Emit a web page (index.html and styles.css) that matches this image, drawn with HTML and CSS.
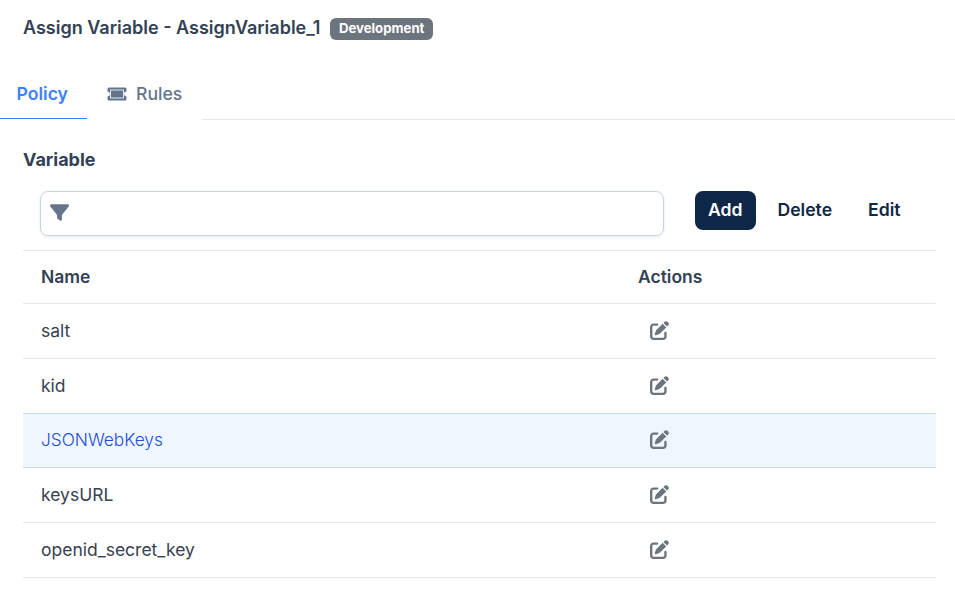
FILE: index.html
```html
<!DOCTYPE html>
<html lang="en">
<head>
<meta charset="utf-8">
<title>Assign Variable</title>
<link rel="stylesheet" href="styles.css">
</head>
<body>
<header class="title-row">
  <h1 class="title">Assign Variable - AssignVariable_1</h1>
  <span class="badge">Development</span>
</header>
<nav class="tabs">
  <a class="tab tab-active">Policy</a>
  <a class="tab tab-rules">
    <svg class="ticket" viewBox="0 0 20 14" aria-hidden="true"><path fill="#64748b" d="M2 0.500H18A1.500 1.500 0 0 1 19.500 2V4.500A2.500 2.500 0 0 0 19.500 9.500V12A1.500 1.500 0 0 1 18 13.500H2A1.500 1.500 0 0 1 0.500 12V9.500A2.500 2.500 0 0 0 0.500 4.500V2A1.500 1.500 0 0 1 2 0.500Z"/><rect x="3.500" y="3" width="13" height="8" fill="#64748b" stroke="#e2e8f0" stroke-width="1"/></svg>
    Rules
  </a>
  <span class="tab-fill"></span>
</nav>
<section class="panel">
  <h2 class="section-title">Variable</h2>
  <div class="toolbar">
    <div class="filter">
      <svg class="funnel" viewBox="0 0 512 512" aria-hidden="true"><path fill="#64748b" d="M3.900 54.900C10.500 40.900 24.500 32 40 32H472c15.500 0 29.500 8.900 36.100 22.900s4.600 30.500-5.200 42.500L320 320.900V448c0 12.100-6.800 23.200-17.700 28.600s-23.800 4.300-33.500-3l-64-48c-8.100-6-12.800-15.500-12.800-25.600V320.900L9 97.300C-.7 85.400-2.800 68.800 3.900 54.900z"/></svg>
    </div>
    <div class="buttons">
      <button class="btn btn-primary">Add</button>
      <button class="btn">Delete</button>
      <button class="btn btn-last">Edit</button>
    </div>
  </div>
  <div class="table">
    <div class="row row-head"><div class="c-name">Name</div><div class="c-actions">Actions</div></div>
    <div class="row"><div class="c-name">salt</div><div class="c-actions"><svg class="edit" viewBox="0 0 512 512" aria-hidden="true"><use href="#edit"/></svg></div></div>
    <div class="row"><div class="c-name">kid</div><div class="c-actions"><svg class="edit" viewBox="0 0 512 512" aria-hidden="true"><use href="#edit"/></svg></div></div>
    <div class="row row-selected"><div class="c-name">JSONWebKeys</div><div class="c-actions"><svg class="edit" viewBox="0 0 512 512" aria-hidden="true"><use href="#edit"/></svg></div></div>
    <div class="row"><div class="c-name">keysURL</div><div class="c-actions"><svg class="edit" viewBox="0 0 512 512" aria-hidden="true"><use href="#edit"/></svg></div></div>
    <div class="row"><div class="c-name">openid_secret_key</div><div class="c-actions"><svg class="edit" viewBox="0 0 512 512" aria-hidden="true"><use href="#edit"/></svg></div></div>
  </div>
</section>
<svg class="defs" width="0" height="0" aria-hidden="true"><defs>
  <path id="edit" fill="#6c757d" d="M471.600 21.700c-21.900-21.900-57.300-21.900-79.200 0L362.300 51.700l97.900 97.900 30.100-30.100c21.900-21.900 21.900-57.300 0-79.200L471.600 21.700zm-299.200 220c-6.100 6.100-10.800 13.600-13.500 21.900l-29.600 88.800c-2.900 8.600-.6 18.100 5.800 24.600s15.900 8.700 24.600 5.800l88.800-29.600c8.200-2.700 15.700-7.400 21.900-13.500L437.700 172.300 339.700 74.300 172.400 241.700zM96 64C43 64 0 107 0 160V416c0 53 43 96 96 96H352c53 0 96-43 96-96V320c0-17.700-14.300-32-32-32s-32 14.300-32 32v96c0 17.700-14.300 32-32 32H96c-17.700 0-32-14.300-32-32V160c0-17.700 14.300-32 32-32h96c17.700 0 32-14.300 32-32s-14.300-32-32-32H96z"/>
</defs></svg>
</body>
</html>
```
FILE: styles.css
```css
* { box-sizing: border-box; }
html, body { margin: 0; padding: 0; background: #fff; }
body { font-family: Inter, "Liberation Sans", sans-serif; color: #334155; width: 955px; height: 613px; overflow: hidden; }
.title-row { display: flex; gap: 10px; padding: 18px 0 0 23px; height: 70px; align-items: flex-start; }
.title { margin: 0; font-size: 18px; line-height: 19px; font-weight: 600; color: #334155; }
.badge { height: 22px; padding: 0 8.5px; border-radius: 6px; background: #6c757d; color: #fff; font-size: 13.2px; font-weight: 700; line-height: 21px; }
.tabs { display: flex; height: 50px; }
.tab { display: flex; align-items: center; font-size: 17.6px; font-weight: 500; height: 50px; padding-bottom: 3px; }
.tab-active { width: 87px; height: 49px; padding: 0 0 2px 16.5px; color: #3b82f6; font-weight: 600; border-bottom: 1px solid #3b82f6; }
.tab-rules { width: 115px; padding-left: 20px; gap: 9px; color: #64748b; }
.tab-fill { flex: 1; border-bottom: 1px solid #e2e8f0; }
.ticket { width: 20px; height: 14px; }
.panel { padding: 0 19px 0 23px; }
.section-title { margin: 30px 0 0; font-size: 18px; line-height: 20px; font-weight: 700; color: #334155; }
.toolbar { display: flex; margin-top: 21px; height: 59px; padding-left: 17px; }
.filter { width: 624px; height: 45px; border: 1px solid #cbd5e1; border-radius: 8px; box-shadow: 0 1px 3px rgba(0,0,0,.1); display: flex; align-items: center; padding-left: 9px; }
.funnel { width: 19px; height: 19px; margin-top: -2px; }
.buttons { display: flex; margin-left: 31px; }
.btn { font: 600 17.6px Inter, "Liberation Sans", sans-serif; height: 39px; border: 0; border-radius: 8px; background: none; color: #0f2747; padding: 0 13px 2px; cursor: pointer; }
.btn + .btn { margin-left: 9px; }
.btn.btn-last { margin-left: 10px; }
.btn-primary { background: #0f2747; color: #fff; }
.table { border-top: 1px solid #e2e8f0; width: 913px; }
.row { display: flex; align-items: center; height: 55px; border-bottom: 1px solid #e2e8f0; font-size: 17.5px; color: #374151; }
.row-head { height: 53px; font-weight: 600; color: #334155; }
.row-selected { height: 55px; background: #eff6ff; border-bottom-color: #bfdbfe; color: #1d4ed8; font-size: 17.3px; font-weight: 350; margin-top: -1px; border-top: 1px solid #bfdbfe; }
.c-name { width: 615px; padding: 0 0 2px 18px; }
.c-actions { flex: 1; padding-bottom: 2px; }
.row:not(.row-head) .c-actions { padding-left: 12px; display: flex; }
.edit { width: 19px; height: 19px; }
.defs { position: absolute; }
```
